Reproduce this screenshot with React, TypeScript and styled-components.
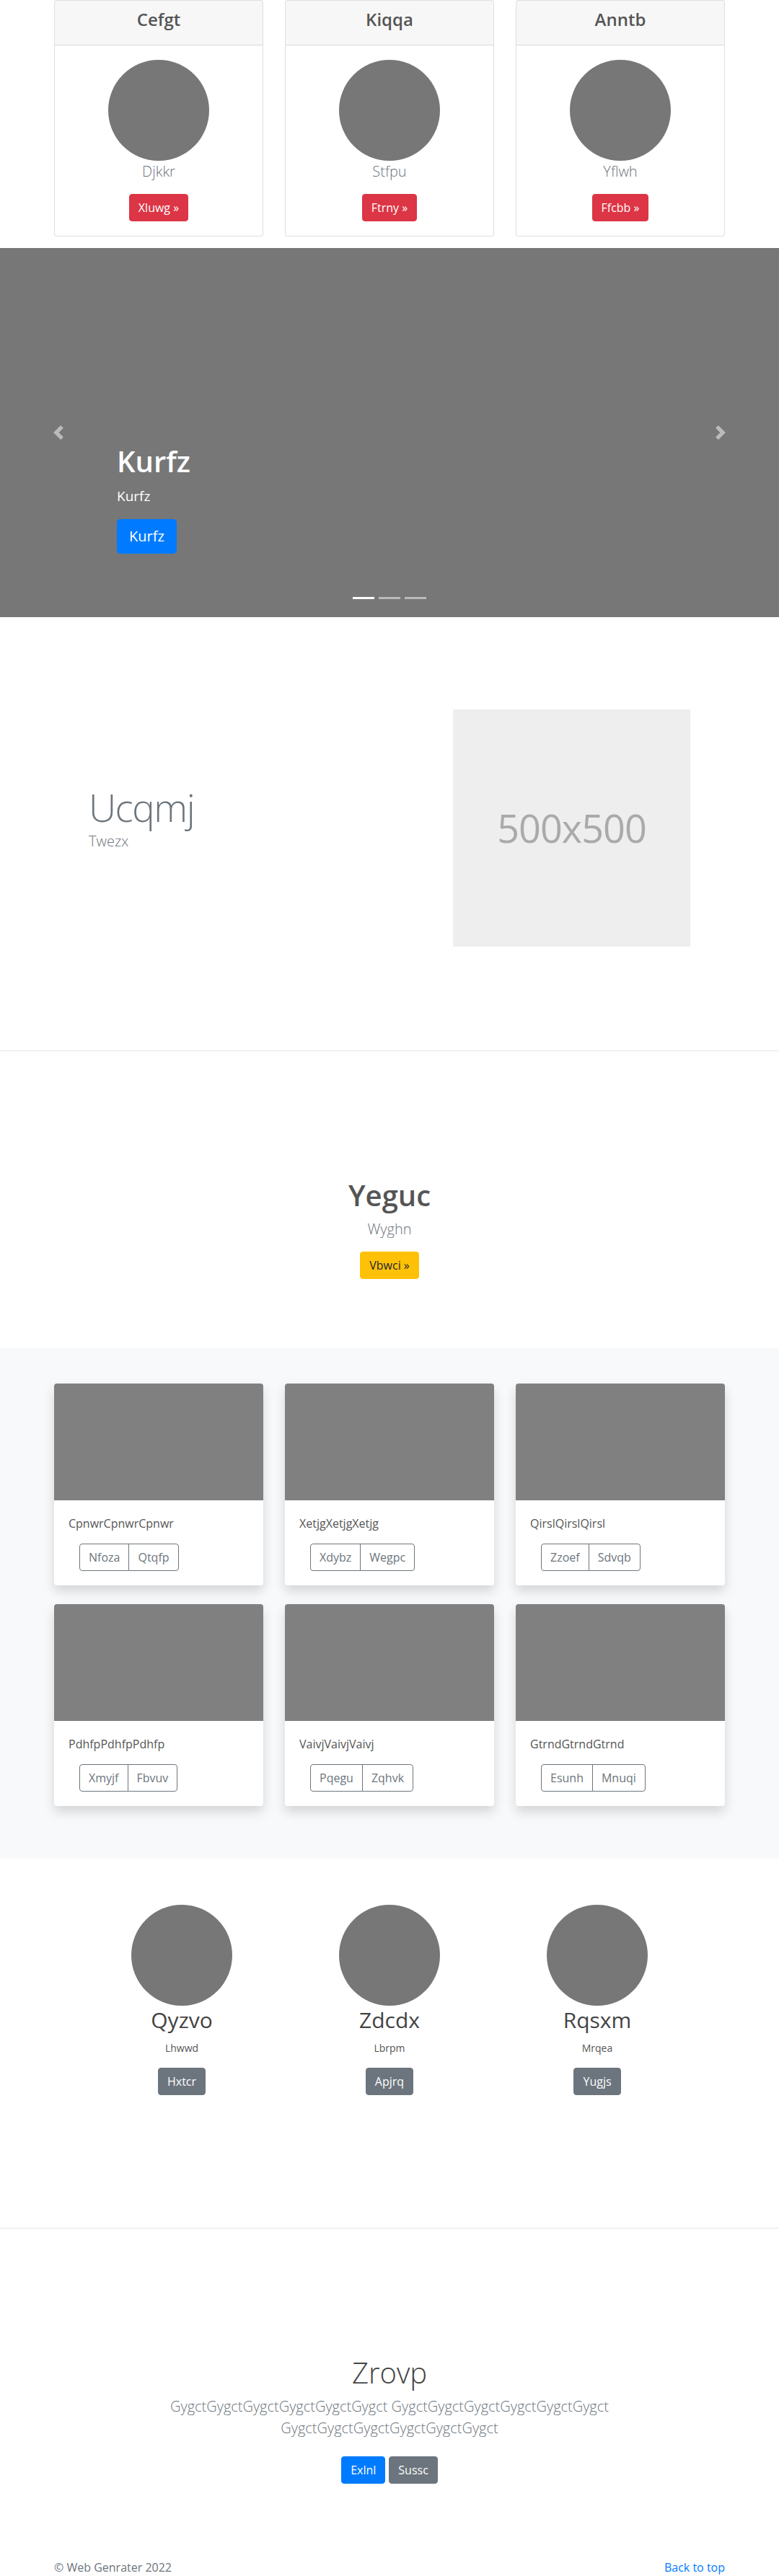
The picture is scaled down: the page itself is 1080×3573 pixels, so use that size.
import React from "react";
import styled, { createGlobalStyle, css } from "styled-components";

const GlobalStyle = createGlobalStyle`
  html { overflow: hidden; }
  body {
    margin: 0;
    font-family: "Open Sans", "Noto Sans", "Liberation Sans", sans-serif;
    font-size: 16px;
    line-height: 1.5;
    color: #212529;
    background: #fff;
  }
  *, *::before, *::after { box-sizing: border-box; }
`;

type Variant = "danger" | "primary" | "warning" | "secondary" | "outline";

const variants: Record<Variant, ReturnType<typeof css>> = {
  danger: css`background:#dc3545;border-color:#dc3545;color:#fff;`,
  primary: css`background:#007bff;border-color:#007bff;color:#fff;`,
  warning: css`background:#ffc107;border-color:#ffc107;color:#212529;`,
  secondary: css`background:#6c757d;border-color:#6c757d;color:#fff;`,
  outline: css`background:transparent;border-color:#6c757d;color:#6c757d;`,
};

const Button = styled.a<{ $variant: Variant; $large?: boolean }>`
  display: inline-block;
  padding: ${(p) => (p.$large ? "8px 16px" : "6px 12px")};
  font-size: ${(p) => (p.$large ? "20px" : "16px")};
  line-height: ${(p) => (p.$large ? "30px" : "24px")};
  border: 1px solid transparent;
  border-radius: ${(p) => (p.$large ? "4.8px" : "4px")};
  text-decoration: none;
  white-space: nowrap;
  font-weight: 400;
  ${(p) => variants[p.$variant]}
`;

const Container = styled.div`
  max-width: 960px;
  margin: 0 auto;
  padding: 0 15px;
`;

const Circle = styled.div<{ $size: number }>`
  width: ${(p) => p.$size}px;
  height: ${(p) => p.$size}px;
  border-radius: 50%;
  background: #777;
  flex-shrink: 0;
`;

/* ---------- profile cards ---------- */
const Deck = styled.div`
  display: grid;
  grid-template-columns: repeat(3, 1fr);
  gap: 30px;
  margin-bottom: 16px;
`;

const ProfileCard = styled.div`
  background: #fff;
  border: 1px solid rgba(0, 0, 0, 0.125);
  border-radius: 4px;
  overflow: hidden;
  text-align: center;
`;

const ProfileHeader = styled.div`
  background: rgba(0, 0, 0, 0.03);
  border-bottom: 1px solid rgba(0, 0, 0, 0.125);
  padding: 12px 20px;
`;

const ProfileTitle = styled.h4`
  margin: 0 0 8px;
  font-size: 24px;
  line-height: 1.2;
  font-weight: 600;
  color: #555;
`;

const ProfileBody = styled.div`
  padding: 20px;
  display: flex;
  flex-direction: column;
  align-items: center;
`;

const Lead = styled.p`
  margin: 0 0 16px;
  font-size: 20px;
  line-height: 30px;
  font-weight: 300;
  color: #6c757d;
`;

/* ---------- carousel ---------- */
const Carousel = styled.div`
  position: relative;
  height: 512px;
  background: #777;
  color: #fff;
  display: flex;
  flex-direction: column;
  justify-content: flex-end;
  align-items: flex-start;
  padding: 0 15% 88px;
`;

const CaptionTitle = styled.h1`
  margin: 0 0 8px;
  font-size: 40px;
  line-height: 48px;
  font-weight: 600;
`;

const CaptionText = styled.p`
  margin: 0 0 16px;
  font-size: 19px;
  line-height: 32px;
`;

const Control = styled.div<{ $side: "left" | "right" }>`
  position: absolute;
  top: 0;
  bottom: 0;
  ${(p) => (p.$side === "left" ? "left: 0;" : "right: 0;")}
  width: 15%;
  display: flex;
  align-items: center;
  justify-content: center;
  opacity: 0.5;
`;

const Indicators = styled.ol`
  position: absolute;
  left: 0;
  right: 0;
  bottom: 25px;
  margin: 0;
  padding: 0;
  list-style: none;
  display: flex;
  justify-content: center;
`;

const Indicator = styled.li<{ $active?: boolean }>`
  width: 30px;
  height: 3px;
  margin: 0 3px;
  background: #fff;
  opacity: ${(p) => (p.$active ? 1 : 0.5)};
`;

/* ---------- featurette ---------- */
const FeatureSection = styled.section`
  padding: 128px 0 144px;
`;

const FeatureRow = styled.div`
  width: 834px;
  margin: 0 auto;
  display: grid;
  grid-template-columns: 1fr 1fr;
  align-items: center;
`;

const FeatureText = styled.div`
  padding-bottom: 27px;
`;

const FeatureHeading = styled.h2`
  margin: 0;
  font-size: 53px;
  line-height: 64px;
  font-weight: 300;
  letter-spacing: -1.5px;
  color: #6c757d;
`;

const FeatureLead = styled.p`
  margin: 0;
  font-size: 20px;
  line-height: 30px;
  font-weight: 300;
  color: #6c757d;
`;

const Placeholder = styled.div`
  justify-self: end;
  width: 329px;
  height: 329px;
  background: #eee;
  color: #aaa;
  display: flex;
  align-items: center;
  justify-content: center;
  font-size: 54px;
  letter-spacing: -1px;
`;

const Divider = styled.hr`
  margin: 0;
  border: 0;
  border-top: 1px solid rgba(0, 0, 0, 0.1);
`;

/* ---------- CTA ---------- */
const CtaSection = styled.section`
  padding: 176px 0 96px;
  text-align: center;
`;

const CtaHeading = styled.h1`
  margin: 0 0 8px;
  font-size: 40px;
  line-height: 48px;
  font-weight: 600;
  color: #555;
`;

/* ---------- album ---------- */
const AlbumSection = styled.section`
  background: #f8f9fa;
  padding: 49px 0 73px;
`;

const AlbumGrid = styled.div`
  display: grid;
  grid-template-columns: repeat(3, 1fr);
  column-gap: 30px;
  row-gap: 26px;
`;

const AlbumCard = styled.div`
  background: #fff;
  border-radius: 4px;
  overflow: hidden;
  box-shadow: 0 8px 16px rgba(0, 0, 0, 0.15);
`;

const AlbumImage = styled.div`
  height: 162px;
  background: #808080;
`;

const AlbumBody = styled.div`
  padding: 20px;
`;

const AlbumText = styled.p`
  margin: 0 0 16px;
  font-size: 16px;
  line-height: 24px;
  color: #555;
`;

const ButtonGroup = styled.div`
  display: inline-flex;
  margin-left: 15px;
  & > a { border-radius: 0; }
  & > a:first-child { border-radius: 4px 0 0 4px; }
  & > a:last-child { border-radius: 0 4px 4px 0; margin-left: -1px; }
`;

/* ---------- team ---------- */
const TeamSection = styled.section`
  padding: 64px 0 184px;
`;

const TeamRow = styled.div`
  width: 864px;
  margin: 0 auto;
  display: grid;
  grid-template-columns: repeat(3, 1fr);
`;

const Member = styled.div`
  display: flex;
  flex-direction: column;
  align-items: center;
  text-align: center;
`;

const MemberName = styled.h2`
  margin: 2px 0 10px;
  font-size: 30px;
  line-height: 36px;
  font-weight: 400;
  color: #444;
`;

const MemberRole = styled.p`
  margin: 0 0 17px;
  font-size: 14px;
  line-height: 21px;
  color: #555;
`;

/* ---------- jumbotron ---------- */
const Jumbotron = styled.section`
  padding-top: 176px;
  text-align: center;
`;

const JumboHeading = styled.h1`
  margin: 0 0 8px;
  font-size: 40px;
  line-height: 48px;
  font-weight: 300;
  color: #444;
`;

const JumboLead = styled.p`
  max-width: 610px;
  margin: 0 auto 24px;
  font-size: 20px;
  line-height: 30px;
  font-weight: 300;
  color: #6c757d;
`;

const JumboActions = styled.div`
  display: flex;
  justify-content: center;
  gap: 5px;
`;

/* ---------- footer ---------- */
const Footer = styled.footer`
  padding-top: 104px;
`;

const FooterInner = styled(Container)`
  display: flex;
  justify-content: space-between;
  color: #6c757d;
`;

const FooterLink = styled.a`
  color: #007bff;
  text-decoration: none;
`;

const ChevronLeft = () => (
  <svg width="20" height="20" viewBox="0 0 8 8" aria-hidden="true">
    <path d="M5.25 0l-4 4 4 4 1.5-1.5L4.25 4l2.5-2.5L5.25 0z" fill="#fff" />
  </svg>
);

const ChevronRight = () => (
  <svg width="20" height="20" viewBox="0 0 8 8" aria-hidden="true">
    <path d="M2.75 0l-1.5 1.5L3.75 4l-2.5 2.5L2.75 8l4-4-4-4z" fill="#fff" />
  </svg>
);

const profiles = [
  { title: "Cefgt", name: "Djkkr", action: "Xluwg" },
  { title: "Kiqqa", name: "Stfpu", action: "Ftrny" },
  { title: "Anntb", name: "Yflwh", action: "Ffcbb" },
];

const albums = [
  { text: "CpnwrCpnwrCpnwr", a: "Nfoza", b: "Qtqfp" },
  { text: "XetjgXetjgXetjg", a: "Xdybz", b: "Wegpc" },
  { text: "QirslQirslQirsl", a: "Zzoef", b: "Sdvqb" },
  { text: "PdhfpPdhfpPdhfp", a: "Xmyjf", b: "Fbvuv" },
  { text: "VaivjVaivjVaivj", a: "Pqegu", b: "Zqhvk" },
  { text: "GtrndGtrndGtrnd", a: "Esunh", b: "Mnuqi" },
];

const team = [
  { name: "Qyzvo", role: "Lhwwd", action: "Hxtcr" },
  { name: "Zdcdx", role: "Lbrpm", action: "Apjrq" },
  { name: "Rqsxm", role: "Mrqea", action: "Yugjs" },
];

const word = "GygctGygctGygctGygctGygctGygct";

export default function App() {
  return (
    <>
      <GlobalStyle />
      <Container>
        <Deck>
          {profiles.map((p) => (
            <ProfileCard key={p.title}>
              <ProfileHeader>
                <ProfileTitle>{p.title}</ProfileTitle>
              </ProfileHeader>
              <ProfileBody>
                <Circle $size={140} />
                <Lead>{p.name}</Lead>
                <Button $variant="danger" href="#">
                  {p.action} »
                </Button>
              </ProfileBody>
            </ProfileCard>
          ))}
        </Deck>
      </Container>

      <Carousel>
        <CaptionTitle>Kurfz</CaptionTitle>
        <CaptionText>Kurfz</CaptionText>
        <Button $variant="primary" $large href="#">
          Kurfz
        </Button>
        <Control $side="left">
          <ChevronLeft />
        </Control>
        <Control $side="right">
          <ChevronRight />
        </Control>
        <Indicators>
          <Indicator $active />
          <Indicator />
          <Indicator />
        </Indicators>
      </Carousel>

      <FeatureSection>
        <FeatureRow>
          <FeatureText>
            <FeatureHeading>Ucqmj</FeatureHeading>
            <FeatureLead>Twezx</FeatureLead>
          </FeatureText>
          <Placeholder>500x500</Placeholder>
        </FeatureRow>
      </FeatureSection>
      <Divider />

      <CtaSection>
        <CtaHeading>Yeguc</CtaHeading>
        <Lead>Wyghn</Lead>
        <Button $variant="warning" href="#">
          Vbwci »
        </Button>
      </CtaSection>

      <AlbumSection>
        <Container>
          <AlbumGrid>
            {albums.map((a) => (
              <AlbumCard key={a.text}>
                <AlbumImage />
                <AlbumBody>
                  <AlbumText>{a.text}</AlbumText>
                  <ButtonGroup>
                    <Button $variant="outline" href="#">
                      {a.a}
                    </Button>
                    <Button $variant="outline" href="#">
                      {a.b}
                    </Button>
                  </ButtonGroup>
                </AlbumBody>
              </AlbumCard>
            ))}
          </AlbumGrid>
        </Container>
      </AlbumSection>

      <TeamSection>
        <TeamRow>
          {team.map((m) => (
            <Member key={m.name}>
              <Circle $size={140} />
              <MemberName>{m.name}</MemberName>
              <MemberRole>{m.role}</MemberRole>
              <Button $variant="secondary" href="#">
                {m.action}
              </Button>
            </Member>
          ))}
        </TeamRow>
      </TeamSection>
      <Divider />

      <Jumbotron>
        <JumboHeading>Zrovp</JumboHeading>
        <JumboLead>
          {word} {word} {word}
        </JumboLead>
        <JumboActions>
          <Button $variant="primary" href="#">
            Exlnl
          </Button>
          <Button $variant="secondary" href="#">
            Sussc
          </Button>
        </JumboActions>
      </Jumbotron>

      <Footer>
        <FooterInner>
          <span>© Web Genrater 2022</span>
          <FooterLink href="#">Back to top</FooterLink>
        </FooterInner>
      </Footer>
    </>
  );
}
